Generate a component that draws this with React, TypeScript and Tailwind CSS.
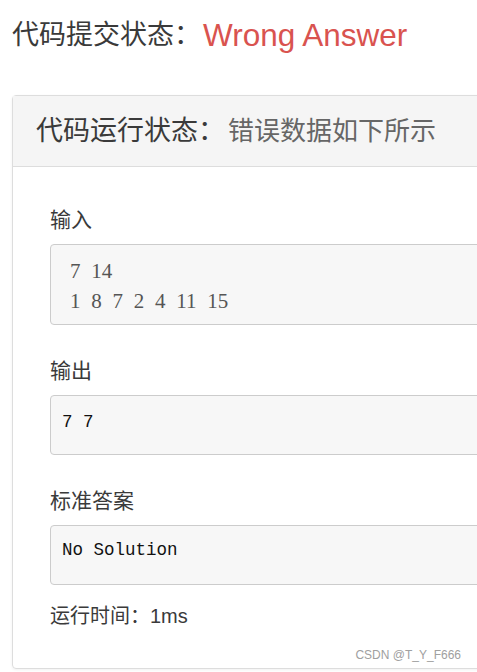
import React from "react";

const cjk = "font-['Liberation_Sans','Noto_Sans_CJK_SC',sans-serif]";

function Field({ label, children, boxClass }: { label: string; children: React.ReactNode; boxClass: string }) {
  return (
    <div>
      <div className="text-[21px] leading-[30px] text-[#3a3a3a] mb-[9px]">{label}</div>
      <div className={`border border-[#ccc] rounded-[4px] bg-[#f7f7f7] ${boxClass}`}>{children}</div>
    </div>
  );
}

export default function App() {
  return (
    <div className={`relative w-full h-[672px] overflow-hidden bg-white ${cjk}`}>
      {/* SUBMIT STATUS */}
      <div className="pt-[15px] pl-[12px] h-[55px] flex items-center whitespace-nowrap">
        <span className="text-[27px] leading-[40px] text-[#3a3a3a]">代码提交状态：</span>
        <span className="text-[31.5px] leading-[40px] text-[#d9534f] ml-[2px]">Wrong Answer</span>
      </div>

      {/* PANEL */}
      <div className="ml-[12px] mt-[40px] w-[620px] border border-[#ddd] rounded-[4px] shadow-[0_1px_3px_rgba(0,0,0,0.06)]">
        <div className="h-[71px] bg-[#f5f5f5] border-b border-[#ddd] flex items-center pl-[23px] whitespace-nowrap">
          <span className="text-[27px] text-[#3a3a3a]">代码运行状态：</span>
          <span className="text-[26px] text-[#666] ml-[3px]">错误数据如下所示</span>
        </div>

        <div className="pl-[37px] pt-[38px] pb-[37px]">
          <Field label="输入" boxClass="h-[81px] pt-[11px] pl-[19px]">
            <pre className="font-['Liberation_Serif',serif] text-[21px] leading-[30px] text-[#555] [word-spacing:5.5px]">
              {"7 14\n1 8 7 2 4 11 15"}
            </pre>
          </Field>

          <div className="mt-[31px]">
            <Field label="输出" boxClass="h-[60px] pt-[15px] pl-[11px]">
              <pre className="font-['Liberation_Mono',monospace] text-[17.5px] leading-[22px] text-[#111]">7 7</pre>
            </Field>
          </div>

          <div className="mt-[31px]">
            <Field label="标准答案" boxClass="h-[60px] pt-[13px] pl-[11px]">
              <pre className="font-['Liberation_Mono',monospace] text-[17.5px] leading-[22px] text-[#111]">No Solution</pre>
            </Field>
          </div>

          <div className="mt-[16px] text-[20px] leading-[30px] text-[#3a3a3a]">运行时间：1ms</div>
        </div>
      </div>

      {/* WATERMARK */}
      <div className="absolute right-[16px] top-[647px] text-[12px] leading-[16px] text-[#a0a0a0] font-['Liberation_Sans',sans-serif]">
        CSDN @T_Y_F666
      </div>
    </div>
  );
}
